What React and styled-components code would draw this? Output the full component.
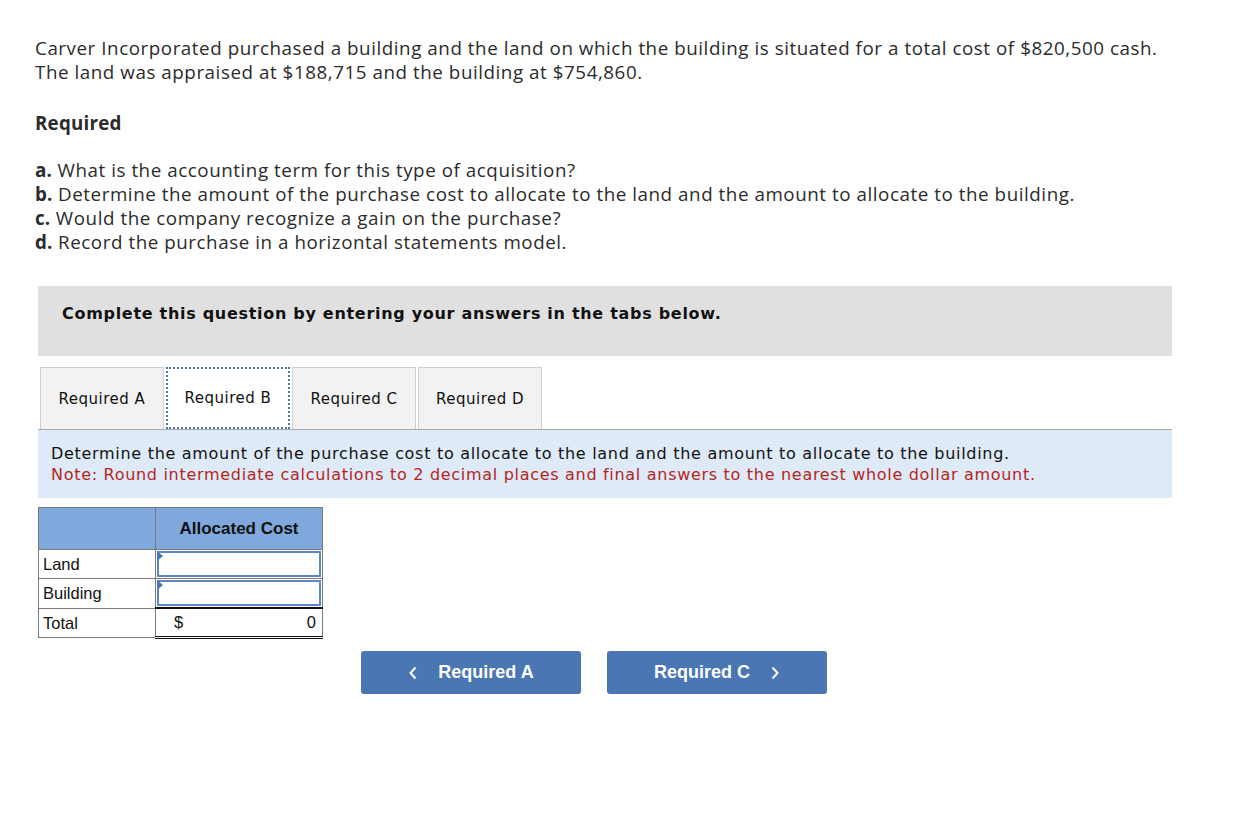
import React from 'react';
import styled, { createGlobalStyle } from 'styled-components';

const GlobalStyle = createGlobalStyle`
  body {
    margin: 0;
    background: #fff;
  }
`;

const Page = styled.div`
  width: 1234px;
  padding: 36px 62px 0 35px;
  box-sizing: border-box;
`;

const Intro = styled.p`
  margin: 0;
  font-family: 'Open Sans', sans-serif;
  font-size: 18.8px;
  letter-spacing: 0.55px;
  line-height: 24px;
  color: #2b2b2b;
`;

const Heading = styled.h3`
  margin: 27px 0 23px;
  font-family: 'Open Sans', sans-serif;
  font-weight: 700;
  font-size: 18.8px;
  letter-spacing: 0.2px;
  line-height: 24px;
  color: #2b2b2b;
`;

const PartList = styled.div`
  font-family: 'Open Sans', sans-serif;
  font-size: 18.8px;
  letter-spacing: 0.55px;
  line-height: 24px;
  color: #2b2b2b;
  b {
    font-weight: 700;
    letter-spacing: 0.2px;
  }
`;

const Workspace = styled.div`
  margin: 32px 0 0 3px;
  width: 1134px;
`;

const Banner = styled.div`
  background: #e0e0e0;
  height: 70px;
  padding: 18px 24px 0;
  box-sizing: border-box;
  font-family: 'DejaVu Sans', Verdana, sans-serif;
  font-weight: 700;
  font-size: 16px;
  letter-spacing: 0.7px;
  color: #111;
`;

const TabBar = styled.div`
  display: flex;
  gap: 2px;
  margin-top: 11px;
  padding-left: 2px;
  border-bottom: 1px solid #a8a8a8;
`;

const Tab = styled.div`
  width: 124px;
  height: 62px;
  box-sizing: border-box;
  display: flex;
  align-items: center;
  justify-content: center;
  font-family: 'DejaVu Sans', Verdana, sans-serif;
  font-size: 15px;
  letter-spacing: 0.5px;
  color: #111;
  background: ${(p) => (p.$active ? '#fff' : '#f2f2f2')};
  border: ${(p) => (p.$active ? '2px dotted #4a76b4' : '1px solid #cfcfcf')};
  border-bottom: ${(p) => (p.$active ? '2px dotted #4a76b4' : 'none')};
  margin-bottom: ${(p) => (p.$active ? '-1px' : '0')};
`;

const InfoBox = styled.div`
  background: #deeaf7;
  padding: 13px 13px 13px;
  font-family: 'DejaVu Sans', Verdana, sans-serif;
  font-size: 16px;
  letter-spacing: 0.7px;
  line-height: 21px;
  color: #111;
`;

const Note = styled.div`
  color: #b3261e;
`;

const Grid = styled.table`
  margin-top: 9px;
  border-collapse: collapse;
  font-family: 'Liberation Sans', Arial, sans-serif;
  font-size: 16.5px;
  color: #111;
`;

const HeadCell = styled.th`
  background: #7fa9dd;
  border: 1px solid #7a7a7a;
  height: 41px;
  width: ${(p) => p.$w}px;
  padding: 0;
  font-weight: 700;
  font-size: 17px;
  vertical-align: middle;
`;

const LabelCell = styled.td`
  border: 1px solid #7a7a7a;
  line-height: 28px;
  padding: 0 4px;
`;

const InputCell = styled.td`
  border: 1px solid #7a7a7a;
  padding: 0;
`;

const Entry = styled.div`
  position: relative;
  height: 26px;
  margin: 1px;
  box-sizing: border-box;
  border: 2px solid #5f87c6;
  background: #fff;
  &::before {
    content: '';
    position: absolute;
    left: -2px;
    top: -2px;
    border-top: 5px solid transparent;
    border-bottom: 5px solid transparent;
    border-left: 6px solid #4a76b4;
  }
`;

const TotalCell = styled.td`
  border-left: 1px solid #7a7a7a;
  border-right: 1px solid #7a7a7a;
  border-top: 2px solid #111;
  border-bottom: 3px double #111;
  line-height: 27px;
  padding: 0 6px 0 18px;
`;

const TotalInner = styled.div`
  display: flex;
  justify-content: space-between;
`;

const NavRow = styled.div`
  display: flex;
  gap: 26px;
  margin: 12px 0 0 323px;
`;

const NavButton = styled.button`
  width: 220px;
  height: 43px;
  border: none;
  border-radius: 3px;
  background: #4a76b4;
  color: #fff;
  font-family: 'Liberation Sans', Arial, sans-serif;
  font-weight: 700;
  font-size: 18px;
  display: flex;
  align-items: center;
  justify-content: center;
  gap: 20px;
  cursor: pointer;
`;

const Chevron = ({ dir }) => (
  <svg width="10" height="16" viewBox="0 0 10 16">
    <path
      d={dir === 'left' ? 'M7.5 2.5 L2.5 8 L7.5 13.5' : 'M2.5 2.5 L7.5 8 L2.5 13.5'}
      fill="none"
      stroke="#fff"
      strokeWidth="2"
    />
  </svg>
);

export default function App() {
  return (
    <Page>
      <GlobalStyle />
      <Intro>
        Carver Incorporated purchased a building and the land on which the building is situated for a total cost of $820,500 cash.
        <br />
        The land was appraised at $188,715 and the building at $754,860.
      </Intro>
      <Heading>Required</Heading>
      <PartList>
        <div><b>a.</b> What is the accounting term for this type of acquisition?</div>
        <div><b>b.</b> Determine the amount of the purchase cost to allocate to the land and the amount to allocate to the building.</div>
        <div><b>c.</b> Would the company recognize a gain on the purchase?</div>
        <div><b>d.</b> Record the purchase in a horizontal statements model.</div>
      </PartList>

      <Workspace>
        <Banner>Complete this question by entering your answers in the tabs below.</Banner>
        <TabBar>
          <Tab>Required A</Tab>
          <Tab $active>Required B</Tab>
          <Tab>Required C</Tab>
          <Tab>Required D</Tab>
        </TabBar>
        <InfoBox>
          <div>Determine the amount of the purchase cost to allocate to the land and the amount to allocate to the building.</div>
          <Note>Note: Round intermediate calculations to 2 decimal places and final answers to the nearest whole dollar amount.</Note>
        </InfoBox>

        <Grid>
          <thead>
            <tr>
              <HeadCell $w={116}></HeadCell>
              <HeadCell $w={166}>Allocated Cost</HeadCell>
            </tr>
          </thead>
          <tbody>
            <tr>
              <LabelCell>Land</LabelCell>
              <InputCell><Entry /></InputCell>
            </tr>
            <tr>
              <LabelCell>Building</LabelCell>
              <InputCell><Entry /></InputCell>
            </tr>
            <tr>
              <LabelCell>Total</LabelCell>
              <TotalCell>
                <TotalInner>
                  <span>$</span>
                  <span>0</span>
                </TotalInner>
              </TotalCell>
            </tr>
          </tbody>
        </Grid>

        <NavRow>
          <NavButton>
            <Chevron dir="left" />
            Required A
          </NavButton>
          <NavButton>
            Required C
            <Chevron dir="right" />
          </NavButton>
        </NavRow>
      </Workspace>
    </Page>
  );
}
